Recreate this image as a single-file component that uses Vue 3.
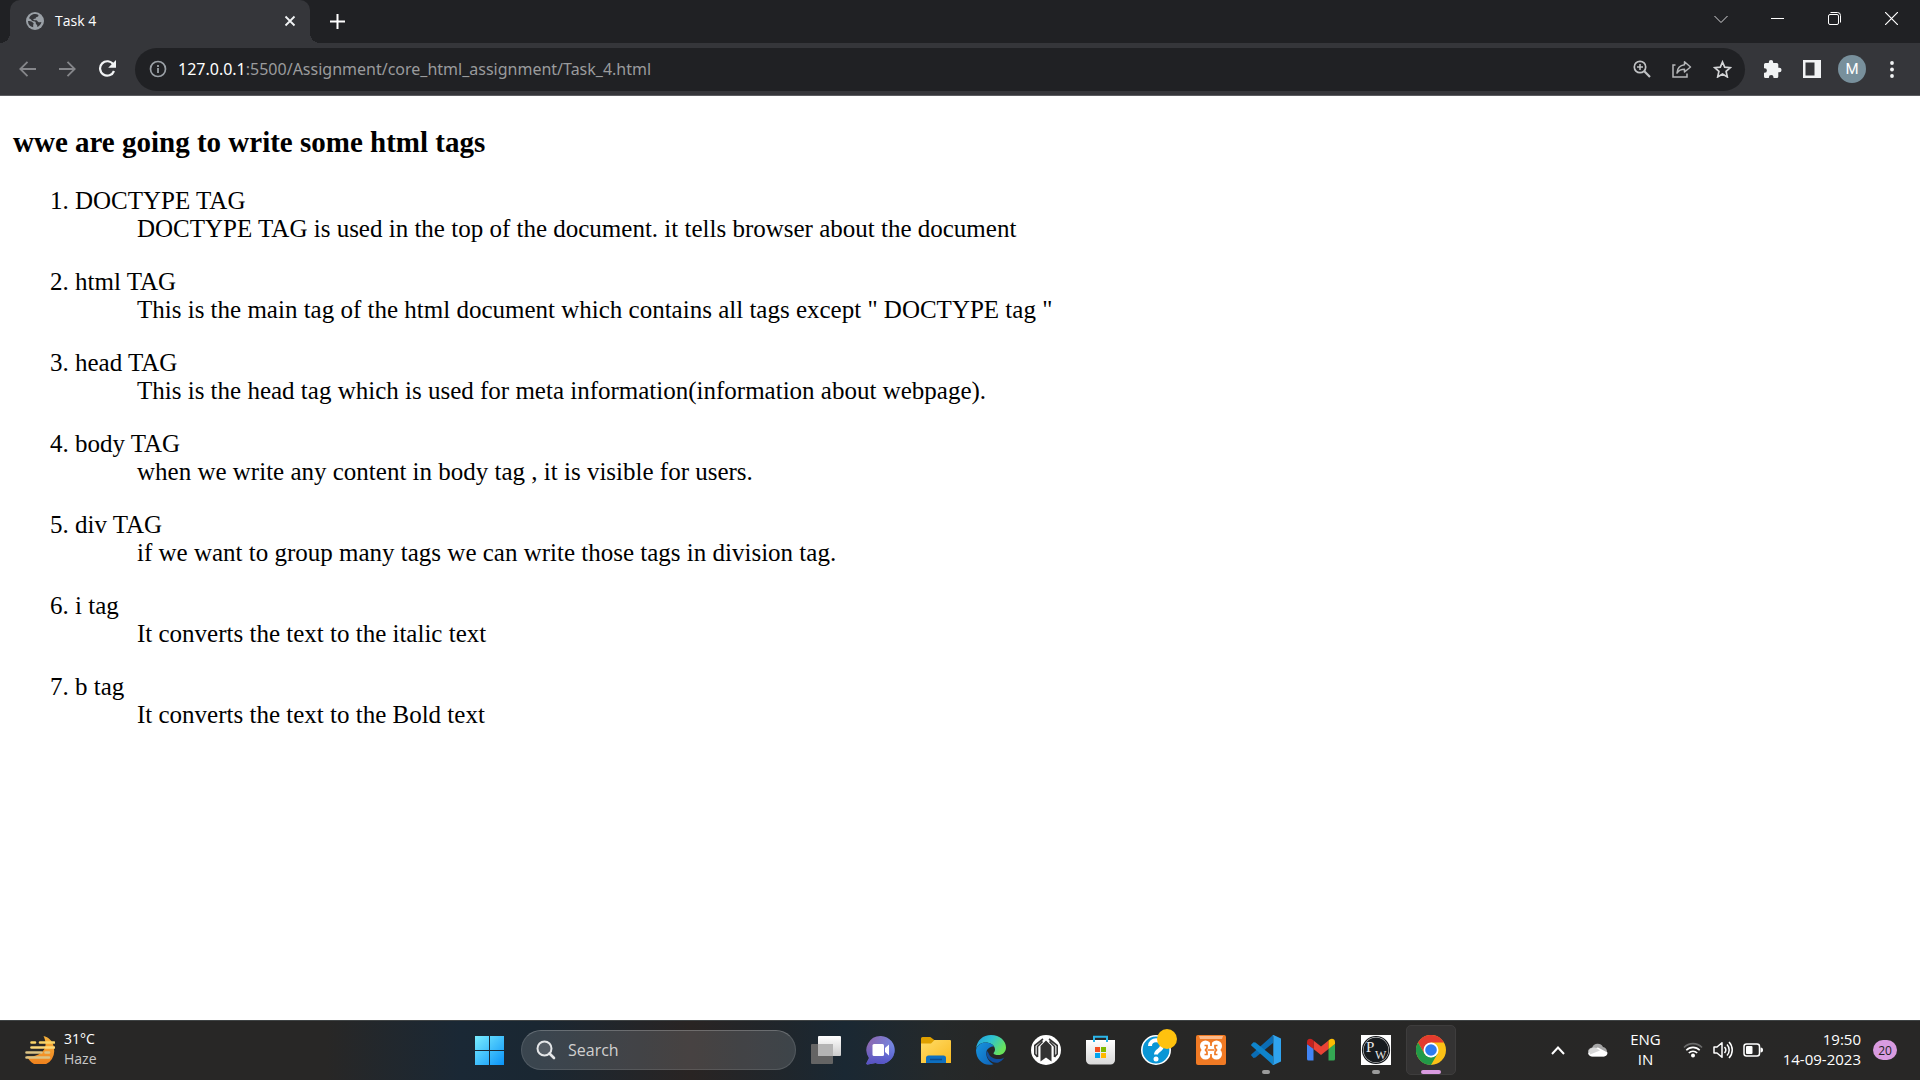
<script setup>
import { ref } from 'vue'

const address = ref(':5500/Assignment/core_html_assignment/Task_4.html')
const query = ref('')

const tags = [
  { name: 'DOCTYPE TAG', text: 'DOCTYPE TAG is used in the top of the document. it tells browser about the document' },
  { name: 'html TAG', text: 'This is the main tag of the html document which contains all tags except " DOCTYPE tag "' },
  { name: 'head TAG', text: 'This is the head tag which is used for meta information(information about webpage).' },
  { name: 'body TAG', text: 'when we write any content in body tag , it is visible for users.' },
  { name: 'div TAG', text: 'if we want to group many tags we can write those tags in division tag.' },
  { name: 'i tag', text: 'It converts the text to the italic text' },
  { name: 'b tag', text: 'It converts the text to the Bold text' }
]
</script>

<template>
  <div class="screen">
    <header class="browser">
      <div class="tabstrip">
        <div class="tab">
          <svg class="favicon" width="18" height="18" viewBox="0 0 18 18">
            <circle cx="9" cy="9" r="9" fill="#9aa0a6" />
            <path d="M2 9c2 0 3 .2 4.500 1.200C8 11 8 12 7.200 12.500v2.800C4 14.800 2 12.500 2 9zM7 2.300C9 1.600 11.200 2 12.500 2.900c0 1.200-.6 1.900-1.600 2.100-1 .2-1.200.8-1.200 1.500-.8.4-1.900.2-2.500 1 .4.900 1.900.6 3 .7 1.300.2 1.400 1.700 2.500 2 .9.200 1.700-.4 2.700-.3-.5 2.300-2 4.300-4.200 5 .2-1 .1-1.800-.7-2.400-.9-.6-.7-1.600-.9-2.500-.8-.8-2.500-.5-3.600-1.300C5 7.900 4.600 6.600 3 6.300 3.700 4.500 5 3 7 2.300z" fill="#35363a" />
          </svg>
          <span class="title">Task 4</span>
          <button class="tab-close" aria-label="Close tab">
            <svg width="12" height="12" viewBox="0 0 12 12"><path d="M1.500 1.500l9 9M10.500 1.500l-9 9" stroke="#f1f3f4" stroke-width="1.800" /></svg>
          </button>
        </div>
        <button class="new-tab" aria-label="New tab">
          <svg width="15" height="15" viewBox="0 0 15 15"><path d="M7.500 0v15M0 7.500h15" stroke="#fff" stroke-width="2" /></svg>
        </button>
        <div class="window-controls">
          <button aria-label="Search tabs"><svg width="14" height="14" viewBox="0 0 14 14"><path d="M.5 4l6.500 6.500L13.500 4" stroke="#d5d6d8" fill="none" /></svg></button>
          <button aria-label="Minimize"><svg width="13" height="13" viewBox="0 0 13 13"><path d="M0 6.500h13" stroke="#fff" /></svg></button>
          <button aria-label="Restore"><svg width="13" height="13" viewBox="0 0 13 13"><g fill="none" stroke="#fff"><rect x=".5" y="2.500" width="10" height="10" rx="1.500" /><path d="M2.500.5h7a3 3 0 0 1 3 3v7" /></g></svg></button>
          <button aria-label="Close window"><svg width="13" height="13" viewBox="0 0 13 13"><path d="M0 0l13 13M13 0L0 13" stroke="#fff" stroke-width="1.200" /></svg></button>
        </div>
      </div>

      <div class="toolbar">
        <button class="tool" aria-label="Back"><svg width="17" height="16" viewBox="0 0 17 16"><path d="M17 8H1.500M8.500.8L1.300 8l7.200 7.200" stroke="#85868a" stroke-width="1.800" fill="none" /></svg></button>
        <button class="tool" aria-label="Forward"><svg width="17" height="16" viewBox="0 0 17 16"><path d="M0 8h15.500M8.500.8L15.700 8l-7.200 7.200" stroke="#85868a" stroke-width="1.800" fill="none" /></svg></button>
        <button class="tool" aria-label="Reload"><svg width="18" height="18" viewBox="0 0 18 18"><path d="M15.300 4.500A7.200 7.200 0 1 0 16 11" stroke="#f1f3f4" stroke-width="2.200" fill="none" /><path d="M18 0v7.800h-7.800z" fill="#f1f3f4" /></svg></button>
        <div class="omnibox">
          <svg width="18" height="18" viewBox="0 0 18 18"><circle cx="9" cy="9" r="7.500" fill="none" stroke="#9aa0a6" stroke-width="1.700" /><path d="M9 8v5M9 5v2" stroke="#9aa0a6" stroke-width="1.800" /></svg>
          <label class="url"><span>127.0.0.1</span><input v-model="address" aria-label="Address" type="text" /></label>
          <button class="tool" aria-label="Zoom"><svg width="18" height="18" viewBox="0 0 18 18"><g fill="none" stroke="#c1c3c5"><circle cx="7" cy="7" r="5.700" stroke-width="1.700" /><path d="M11.300 11.300l5.700 5.700" stroke-width="2.200" /><path d="M7 4v6M4 7h6" stroke-width="1.500" /></g></svg></button>
          <button class="tool" aria-label="Share"><svg width="20" height="18" viewBox="0 0 20 18"><g fill="none" stroke="#b5b7b9" stroke-width="1.500"><path d="M3.500 5H1v12h14v-3.500" /><path d="M12.500 1.800L18.500 7l-6 5V9.300C9 9.300 6.700 10.300 5 13c.3-4.800 3-7.700 7.500-8.200z" stroke-linejoin="round" /></g></svg></button>
          <button class="tool" aria-label="Bookmark"><svg width="19" height="18" viewBox="0 0 19 18"><path d="M9.500 2l2.200 5.200 5.600.5-4.200 3.700 1.200 5.500-4.800-2.900-4.800 2.900 1.200-5.500L1.700 7.700l5.600-.5z" fill="none" stroke="#d4d5d7" stroke-width="1.700" /></svg></button>
        </div>
        <button class="tool" aria-label="Extensions"><svg width="19" height="18" viewBox="0 0 19 18"><path d="M1 4.500a1.500 1.500 0 0 1 1.500-1.500h3.300v-.7a2.200 2.200 0 0 1 4.400 0V3h3.600a1.500 1.500 0 0 1 1.500 1.500v3.300h1a2.200 2.200 0 0 1 0 4.500h-1v4.200a1.500 1.500 0 0 1-1.500 1.500h-3.300v-.7a2.300 2.300 0 0 0-4.600 0v.7H2.500A1.500 1.500 0 0 1 1 16.500v-3.700h.6a2.300 2.300 0 0 0 0-4.600H1z" fill="#f1f3f4" /></svg></button>
        <button class="tool" aria-label="Side panel"><svg width="18" height="18" viewBox="0 0 18 18"><path d="M0 0h18v18H0zM2.500 2.500v13h9v-13z" fill="#f1f3f4" fill-rule="evenodd" /></svg></button>
        <button class="tool" aria-label="Profile"><span class="avatar">M</span></button>
        <button class="tool" aria-label="Menu"><svg width="4" height="17" viewBox="0 0 4 17" fill="#f1f3f4"><circle cx="2" cy="2" r="1.900" /><circle cx="2" cy="8.500" r="1.900" /><circle cx="2" cy="15" r="1.900" /></svg></button>
      </div>
    </header>

    <main class="page">
      <h3>wwe are going to write some html tags</h3>
      <ol>
        <li v-for="tag in tags" :key="tag.name">
          <dl>
            <dt>{{ tag.name }}</dt>
            <dd>{{ tag.text }}</dd>
          </dl>
        </li>
      </ol>
    </main>

    <footer class="taskbar">
      <button class="weather">
        <svg width="30" height="28" viewBox="0 0 30 28">
          <defs><linearGradient id="sun" x1="0" y1="0" x2="0" y2="1"><stop offset="0" stop-color="#f6b23c" /><stop offset="1" stop-color="#f0801c" /></linearGradient></defs>
          <path d="M18.500 0C25 1.500 29 7 29 13a14 14 0 0 1-27 7c8 2 18-3 18.500-11 .2-4-1-7-2-9z" fill="url(#sun)" />
          <g stroke-width="2.600" stroke-linecap="round"><path d="M6.500 6.500h3.500M15 6.500h14" stroke="#f9d366" /><path d="M6.500 11.500h22.500" stroke="#fbd878" /><path d="M1.500 16.500h15M20.500 16.500h3.500M1.500 21.500h22.500" stroke="#dcc384" /></g>
        </svg>
        <span class="lines"><span>31°C</span><span class="dim">Haze</span></span>
      </button>

      <nav class="apps">
        <button class="app" aria-label="Start">
          <svg width="30" height="30" viewBox="0 0 30 30"><defs><linearGradient id="win" x1="0" y1="0" x2="1" y2="1"><stop offset="0" stop-color="#79edff" /><stop offset="1" stop-color="#0a93f8" /></linearGradient></defs><path d="M0 1h14v14H0zM15 1h14v14H15zM0 16h14v14H0zM15 16h14v14H15z" fill="url(#win)" /></svg>
        </button>
        <label class="search">
          <svg width="20" height="20" viewBox="0 0 20 20"><circle cx="8.500" cy="8.500" r="7" fill="#ffffff22" stroke="#e4e6e8" stroke-width="2" /><path d="M13.500 13.500l4.500 4.500" stroke="#e4e6e8" stroke-width="2.600" stroke-linecap="round" /></svg>
          <input v-model="query" type="text" placeholder="Search" aria-label="Search" />
        </label>
        <button class="app" aria-label="Task view">
          <svg width="30" height="30" viewBox="0 0 30 30"><defs><linearGradient id="tv" x1="0" y1="0" x2="0" y2="1"><stop offset="0" stop-color="#fff" /><stop offset="1" stop-color="#ccc" /></linearGradient></defs><rect y="9" width="22" height="20" rx="1" fill="#646464" /><rect x="7" y="1" width="23" height="20" rx="1" fill="url(#tv)" /><path d="M7 9h15v12H7z" fill="#b4b4b4" /></svg>
        </button>
        <button class="app" aria-label="Chat">
          <svg width="30" height="30" viewBox="0 0 30 30"><defs><linearGradient id="chat" x1="0" y1="0" x2="1" y2=".4"><stop offset="0" stop-color="#8e62a8" /><stop offset="1" stop-color="#7289e6" /></linearGradient><linearGradient id="chat2" x1="0" y1="0" x2="0" y2="1"><stop offset=".3" stop-color="#5557c8" stop-opacity="0" /><stop offset="1" stop-color="#5450c4" /></linearGradient></defs><path d="M15 1a14 14 0 1 1-5.500 27L1.500 29.500a1 1 0 0 1-1-1.500L3 23A14 14 0 0 1 15 1z" fill="url(#chat)" /><path d="M15 1a14 14 0 1 1-5.500 27L1.500 29.500a1 1 0 0 1-1-1.500L3 23A14 14 0 0 1 15 1z" fill="url(#chat2)" /><rect x="6.500" y="9" width="11.500" height="12" rx="1.500" fill="#fff" /><path d="M19 13l4-3.500v11L19 17z" fill="#fff" /></svg>
        </button>
        <button class="app" aria-label="File Explorer">
          <svg width="30" height="30" viewBox="0 0 30 30"><defs><linearGradient id="fold" x1="0" y1="0" x2="1" y2="1"><stop offset="0" stop-color="#ffdc68" /><stop offset="1" stop-color="#f9b91f" /></linearGradient></defs><path d="M0 3.500A1.500 1.500 0 0 1 1.500 2h7.800l4 3H28v5H0z" fill="#dfa000" /><path d="M0 28V8.500h10L13.500 5H29a1 1 0 0 1 1 1v22z" fill="url(#fold)" /><path d="M5 28v-5a2.500 2.500 0 0 1 2.500-2.500h15A2.500 2.500 0 0 1 25 23v5z" fill="#0d6fc0" /><path d="M9 24.500h12" stroke="#0b4a8c" stroke-width="1.500" /></svg>
        </button>
        <button class="app" aria-label="Edge">
          <svg width="30" height="30" viewBox="0 0 30 30"><defs><linearGradient id="e1" x1="0" y1="0" x2="1" y2=".5"><stop offset="0" stop-color="#1f9be0" /><stop offset=".5" stop-color="#2fc3d0" /><stop offset="1" stop-color="#69e35b" /></linearGradient><linearGradient id="e2" x1="0" y1="0" x2="1" y2="1"><stop offset="0" stop-color="#1795df" /><stop offset="1" stop-color="#0f62b8" /></linearGradient></defs><path d="M0 14C1 5 7 0 15 0c9 0 15 6 15 12.500 0 5-4 7.500-7.500 7.500-3 0-5-.8-5-1.800 0-.7 1.500-1.200 1.500-3.700C19 10 14 7.500 9.500 7.500 5 7.500 1.500 10 0 14z" fill="url(#e1)" /><path d="M0 15C1 10 5.500 7.500 9.500 7.500c3.500 0 7 1.500 8.500 4-2-.5-6.500 1-7.500 5-1 5 2 10 7 12.700C8 32 0 25 0 15z" fill="url(#e2)" /><path d="M10.700 15.500C9 24 17 29 22.500 27.500c2.500-1 4.500-3 5.800-5-5 3-14 1.500-15.800-4.500z" fill="#104f9f" /></svg>
        </button>
        <button class="app" aria-label="Assistant">
          <svg width="30" height="30" viewBox="0 0 30 30"><circle cx="15" cy="15" r="15" fill="#fff" /><path d="M9.500 26.500V11L15 5.500l5.500 5.500v15.500L15 22.500z" fill="#333" /><path d="M6.500 22L3.800 19v-8.500L12 4M23.500 22l2.700-3v-8.500L18 4M6.500 22V11.500l5-5M23.500 22V11.500l-5-5" fill="none" stroke="#333" stroke-width="1.600" /></svg>
        </button>
        <button class="app" aria-label="Microsoft Store">
          <svg width="30" height="30" viewBox="0 0 30 30"><defs><linearGradient id="bag" x1="0" y1="0" x2="0" y2="1"><stop offset="0" stop-color="#fff" /><stop offset="1" stop-color="#d8d8d8" /></linearGradient></defs><path d="M0 5h29v20a4.500 4.500 0 0 1-4.500 4.500h-20A4.500 4.500 0 0 1 0 25z" fill="url(#bag)" /><path d="M8 7V1.800h13V7" fill="none" stroke="#2cb6e9" stroke-width="2" /><path d="M9 12h5v5H9z" fill="#f25022" /><path d="M15 12h5v5h-5z" fill="#7fba00" /><path d="M9 18h5v5H9z" fill="#00a4ef" /><path d="M15 18h5v5h-5z" fill="#ffb900" /></svg>
        </button>
        <button class="app" aria-label="Get Help">
          <svg width="30" height="30" viewBox="0 0 30 30"><circle cx="15" cy="15" r="14.200" fill="#0a96d6" stroke="#fff" stroke-width="1.600" /><path d="M9 11c0-7.500 12-7.500 12-.5 0 5-6 4.500-6 9" fill="none" stroke="#fff" stroke-width="4" /><circle cx="15" cy="24" r="2.500" fill="#fff" /></svg>
          <i class="dot"></i>
        </button>
        <button class="app" aria-label="XAMPP">
          <svg width="30" height="30" viewBox="0 0 30 30"><rect width="30" height="30" rx="2" fill="#f07a24" /><path d="M3 1h24l-1 3H4z" fill="#fbb98a" /><g fill="#fff"><circle cx="9.500" cy="11" r="5.500" /><circle cx="20.500" cy="11" r="5.500" /><circle cx="9.500" cy="19" r="5.500" /><circle cx="20.500" cy="19" r="5.500" /><path d="M9 10h12v10H9z" /></g><path d="M8.500 10.500h2.500v2.500l-1.500 2 1.500 2v2.500H8.500M21.500 10.500H19v2.500l1.500 2-1.500 2v2.500h2.500M11.500 15h7M15 6v5M15 19v5" fill="none" stroke="#f07a24" stroke-width="1.700" /></svg>
        </button>
        <button class="app" aria-label="Visual Studio Code">
          <svg width="30" height="30" viewBox="0 0 30 30"><path d="M22 0v8L4.500 22.500 2.500 23 .5 20.800a1 1 0 0 1 0-1.500z" fill="#0b6db5" /><path d="M.5 9.200L2.500 7.200l2 .3L22 21.500V30L.5 10.700a1 1 0 0 1 0-1.500z" fill="#0f84cb" /><path d="M21.500.2L22.500 0 30 3.500v23L22.500 30l-1-.2c.5-.3.8-.8.8-1.500V1.700c0-.7-.3-1.200-.8-1.500z" fill="#2fa3ef" /></svg>
          <i class="running"></i>
        </button>
        <button class="app" aria-label="Gmail">
          <svg width="28" height="30" viewBox="0 0 28 30"><path d="M0 9l6.500 4.500V25.500H1.500A1.500 1.500 0 0 1 0 24z" fill="#4285f4" /><path d="M28 9l-6.500 4.500v12h5A1.500 1.500 0 0 0 28 24z" fill="#34a853" /><path d="M6.500 5.500L14 11.500l7.500-6V14L14 20l-7.500-6z" fill="#ea4335" /><path d="M0 7c0-3 3-4 5-2.700l1.500 1.200V14L0 9z" fill="#c5221f" /><path d="M28 7c0-3-3-4-5-2.700l-1.500 1.200V14L28 9z" fill="#fbbc04" /></svg>
        </button>
        <button class="app" aria-label="PW">
          <svg width="30" height="30" viewBox="0 0 30 30"><path d="M0 0h30v30H0z" fill="#fff" /><circle cx="15" cy="15" r="13.500" fill="#fff" stroke="#171b1f" stroke-width="1.200" /><circle cx="15" cy="15" r="12.500" fill="#171b1f" /><g fill="#e6e6e6" font-family="'Liberation Serif', serif"><text x="5" y="17" font-size="15">P</text><text x="14" y="24" font-size="12">W</text></g></svg>
          <i class="running"></i>
        </button>
        <button class="app active" aria-label="Chrome">
          <svg width="30" height="30" viewBox="0 0 30 30"><circle cx="15" cy="15" r="15" fill="#fbc116" /><path d="M2 7.500A15 15 0 0 1 28 7.500H15L8.500 18.700z" fill="#e33b2e" /><path d="M2 7.500a15 15 0 0 0 13 22.500l6.500-11.300L15 22.500l-6.500-3.800z" fill="#229a48" /><circle cx="15" cy="15" r="7.500" fill="#fff" /><circle cx="15" cy="15" r="5.800" fill="#2d7bee" /></svg>
          <i class="running current"></i>
        </button>
      </nav>

      <div class="tray">
        <button class="caret" aria-label="Show hidden icons"><svg width="14" height="9" viewBox="0 0 14 9"><path d="M1 8l6-6.500L13 8" fill="none" stroke="#fff" stroke-width="2" /></svg></button>
        <button class="cloud" aria-label="OneDrive"><svg width="20" height="14" viewBox="0 0 20 14"><path d="M4.500 13.500a4.500 4.500 0 0 1-.3-9A6 6 0 0 1 15 4a5 5 0 0 1 1 9.500z" fill="#a6a6a6" /><path d="M4 6l6-1.500 9.500 5A4 4 0 0 1 16 13.500H4.500C2 13.500.5 12 .3 10.500z" fill="#fff" /><path d="M1 7.500C3 4 7 4 9 5.500l3 2-10 4z" fill="#d8d8d8" /></svg></button>
        <button class="lines lang"><span>ENG</span><span>IN</span></button>
        <button class="status" aria-label="Network, volume and battery">
          <svg width="20" height="16" viewBox="0 0 20 16"><g fill="none" stroke-width="1.600"><path d="M1 5.500a12.500 12.500 0 0 1 18 0" stroke="#6a6a6a" /><path d="M3.300 8.200a9.300 9.300 0 0 1 13.400 0M5.800 11a5.800 5.800 0 0 1 8.400 0" stroke="#fff" /></g><circle cx="10" cy="13.500" r="2" fill="#fff" /></svg>
          <svg width="20" height="18" viewBox="0 0 20 18"><g fill="none" stroke="#fff" stroke-width="1.500"><path d="M1 6v6h3l5 4.200V1.800L4 6z" stroke-linejoin="round" /><path d="M11.500 6a4.500 4.500 0 0 1 0 6M14 3.500a8 8 0 0 1 0 11M16 1a11.500 11.500 0 0 1 0 16" /></g></svg>
          <svg width="20" height="14" viewBox="0 0 20 14"><rect x="1" y="1" width="15.500" height="12" rx="2.500" fill="none" stroke="#fff" stroke-width="1.500" /><rect x="3" y="3" width="6.500" height="8" rx="1" fill="#fff" /><path d="M17.500 4.500c2 0 2.500 1 2.500 2.500s-.5 2.500-2.500 2.500z" fill="#fff" /></svg>
        </button>
        <button class="lines clock"><span>19:50</span><span>14-09-2023</span></button>
        <button class="badge" aria-label="Notifications">20</button>
      </div>
    </footer>
  </div>
</template>

<style>
body {
  margin: 0;
  background: #fff;
}
</style>

<style scoped>
.screen {
  display: flex;
  flex-direction: column;
  min-height: 100vh;
  font-family: "Open Sans", "Noto Sans", sans-serif;
}
button {
  display: flex;
  align-items: center;
  justify-content: center;
  flex: none;
  padding: 0;
  border: 0;
  background: none;
  color: inherit;
  font: inherit;
}
input {
  min-width: 0;
  flex: 1;
  padding: 0;
  border: 0;
  outline: 0;
  background: none;
  font: inherit;
}
svg {
  display: block;
  flex: none;
}

.tabstrip {
  display: flex;
  height: 43px;
  padding-left: 10px;
  background: #202124;
}
.tab {
  position: relative;
  display: flex;
  align-items: center;
  box-sizing: border-box;
  width: 300px;
  padding: 0 14px 1px 16px;
  border-radius: 10px 10px 0 0;
  background: #35363a;
  color: #fff;
  font-size: 14px;
}
.tab::before,
.tab::after {
  content: "";
  position: absolute;
  bottom: 0;
  width: 10px;
  height: 10px;
}
.tab::before {
  right: 100%;
  background: radial-gradient(circle at 0 0, #202124 10px, #35363a 10px);
}
.tab::after {
  left: 100%;
  background: radial-gradient(circle at 100% 0, #202124 10px, #35363a 10px);
}
.title {
  flex: 1;
  margin-left: 11px;
  padding-bottom: 2px;
}
.new-tab {
  width: 55px;
}
.window-controls {
  display: flex;
  height: 37px;
  margin-left: auto;
}
.window-controls button {
  width: 57px;
}

.toolbar {
  display: flex;
  align-items: center;
  height: 52px;
  padding: 0 8px 0 7px;
  border-bottom: 1px solid #5b5c60;
  background: #35363a;
}
.tool {
  width: 40px;
  height: 40px;
}
.omnibox {
  display: flex;
  align-items: center;
  flex: 1;
  height: 43px;
  margin: 0 7px 0 8px;
  padding: 0 3px 0 14px;
  border-radius: 22px;
  background: #202124;
}
.url {
  display: flex;
  flex: 1;
  margin-left: 11px;
  color: #fff;
  font-family: "Noto Sans", sans-serif;
  font-size: 16px;
}
.url input {
  color: #9a9b9d;
}
.avatar {
  width: 28px;
  border-radius: 50%;
  background: #78909c;
  color: #fff;
  font-family: Roboto, sans-serif;
  font-size: 15px;
  line-height: 28px;
}

.page {
  flex: 1;
  padding: 0 13px;
  color: #000;
  font-family: "Liberation Serif", serif;
  font-size: 25px;
  line-height: 28px;
}
h3 {
  margin: 29px 0 28px;
  font-size: 29px;
  line-height: 34px;
}
ol {
  margin: 0;
  padding-left: 62px;
}
dl {
  margin: 0 0 25px;
}
dd {
  margin-left: 62px;
}

.taskbar {
  display: grid;
  grid-template-columns: 1fr auto 1fr;
  align-items: center;
  height: 60px;
  box-shadow: inset 0 1px #3f4344;
  background: linear-gradient(90deg, #282726 0, #282726 17%, #1a2835 24%, #1a2732 28%, #292423 36%, #1f262c 41%, #1a2833 44%, #25292a 49%, #272726 52%, #282726 100%);
  color: #fff;
  font-size: 15px;
}
.lines {
  display: flex;
  flex-direction: column;
  align-items: flex-start;
  padding-bottom: 3px;
  line-height: 20px;
}
.dim {
  color: #c8c8c8;
}
.weather {
  justify-self: start;
  gap: 9px;
  margin-left: 25px;
  font-size: 14px;
}
.apps {
  display: flex;
  align-items: center;
  gap: 5px;
  padding-left: 1px;
}
.app {
  position: relative;
  box-sizing: border-box;
  width: 50px;
  height: 50px;
}
.active {
  border: 1px solid #3e3d3d;
  border-radius: 5px;
  background: #343333;
}
.running {
  position: absolute;
  bottom: 1px;
  left: 50%;
  width: 8px;
  height: 4px;
  margin-left: -4px;
  border-radius: 2px;
  background: #9b9b9b;
}
.current {
  bottom: 0;
  width: 20px;
  margin-left: -10px;
  background: #d99be0;
}
.dot {
  position: absolute;
  top: 4px;
  right: 4px;
  width: 20px;
  height: 20px;
  border-radius: 50%;
  background: #ffc20e;
}
.search {
  display: flex;
  align-items: center;
  gap: 12px;
  box-sizing: border-box;
  width: 275px;
  height: 40px;
  margin-left: 1px;
  padding: 0 14px;
  border: 1px solid #ffffff1c;
  border-top-color: #ffffff38;
  border-radius: 20px;
  background: #ffffff24;
  font-size: 16px;
}
.search input {
  color: #fff;
}
.search input::placeholder {
  color: #d0d0d0;
  opacity: 1;
}
.tray {
  display: flex;
  align-items: center;
  justify-self: end;
  margin-right: 23px;
}
.cloud {
  margin-left: 23px;
}
.lang {
  align-items: center;
  margin-left: 22px;
}
.status {
  gap: 10px;
  margin-left: 22px;
}
.clock {
  align-items: flex-end;
  margin-left: 20px;
}
.badge {
  width: 24px;
  height: 20px;
  margin-left: 12px;
  border-radius: 10px;
  background: #d99be0;
  color: #222;
  font-size: 12px;
}
</style>
